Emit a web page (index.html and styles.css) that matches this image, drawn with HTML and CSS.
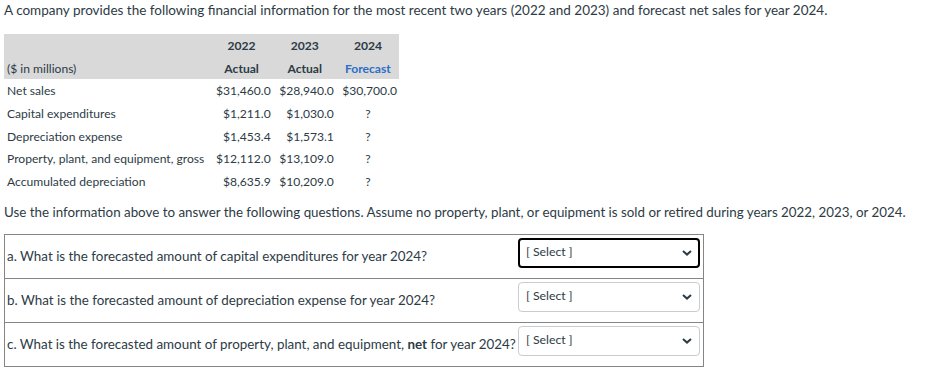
FILE: index.html
```html
<!DOCTYPE html>
<html lang="en">
<head>
    <meta charset="UTF-8">
    <title>Forecasting PP&amp;E</title>
    <link rel="stylesheet" href="styles.css">
</head>
<body>
    <p class="intro">A company provides the following financial information for the most recent two years (2022 and 2023) and forecast net sales for year 2024.</p>

    <table class="fin-table">
        <colgroup>
            <col class="col-label">
            <col class="col-num">
            <col class="col-num">
            <col class="col-num">
        </colgroup>
        <thead>
            <tr>
                <th></th>
                <th class="center">2022</th>
                <th class="center">2023</th>
                <th class="center">2024</th>
            </tr>
            <tr>
                <th class="label">($ in millions)</th>
                <th class="center">Actual</th>
                <th class="center">Actual</th>
                <th class="center forecast">Forecast</th>
            </tr>
        </thead>
        <tbody>
            <tr>
                <td>Net sales</td>
                <td class="num">$31,460.0</td>
                <td class="num">$28,940.0</td>
                <td class="num">$30,700.0</td>
            </tr>
            <tr>
                <td>Capital expenditures</td>
                <td class="num">$1,211.0</td>
                <td class="num">$1,030.0</td>
                <td class="unknown">?</td>
            </tr>
            <tr>
                <td>Depreciation expense</td>
                <td class="num">$1,453.4</td>
                <td class="num">$1,573.1</td>
                <td class="unknown">?</td>
            </tr>
            <tr>
                <td>Property, plant, and equipment, gross</td>
                <td class="num">$12,112.0</td>
                <td class="num">$13,109.0</td>
                <td class="unknown">?</td>
            </tr>
            <tr>
                <td>Accumulated depreciation</td>
                <td class="num">$8,635.9</td>
                <td class="num">$10,209.0</td>
                <td class="unknown">?</td>
            </tr>
        </tbody>
    </table>

    <p class="instructions">Use the information above to answer the following questions. Assume no property, plant, or equipment is sold or retired during years 2022, 2023, or 2024.</p>

    <table class="questions">
        <tr>
            <td class="q-text">a. What is the forecasted amount of capital expenditures for year 2024?</td>
            <td class="q-answer">
                <div class="select focused"><span>[ Select ]</span>
                    <svg viewBox="0 0 10 6" width="10" height="6"><path d="M1 1l4 3.6L9 1" fill="none" stroke="currentColor" stroke-width="2"/></svg>
                </div>
            </td>
        </tr>
        <tr>
            <td class="q-text">b. What is the forecasted amount of depreciation expense for year 2024?</td>
            <td class="q-answer">
                <div class="select"><span>[ Select ]</span>
                    <svg viewBox="0 0 10 6" width="10" height="6"><path d="M1 1l4 3.6L9 1" fill="none" stroke="currentColor" stroke-width="2"/></svg>
                </div>
            </td>
        </tr>
        <tr>
            <td class="q-text">c. What is the forecasted amount of property, plant, and equipment, <strong>net</strong> for year 2024?</td>
            <td class="q-answer">
                <div class="select"><span>[ Select ]</span>
                    <svg viewBox="0 0 10 6" width="10" height="6"><path d="M1 1l4 3.6L9 1" fill="none" stroke="currentColor" stroke-width="2"/></svg>
                </div>
            </td>
        </tr>
    </table>
</body>
</html>
```

FILE: styles.css
```css
body {
    margin: 0;
    padding: 1px 4px;
    font-family: Lato, "Open Sans", sans-serif;
    font-size: 13.5px;
    color: #2d3b45;
    background: #fff;
}
p {
    margin: 0;
    white-space: nowrap;
}
.intro {
    line-height: 18px;
}
.fin-table {
    margin-top: 15px;
    border-collapse: collapse;
    width: 395px;
    font-size: 12.1px;
}
.col-label {
    width: 205px;
}
.col-num {
    width: 63px;
}
.fin-table th,
.fin-table td {
    height: 22.7px;
    padding: 0 2px 0 3px;
    white-space: nowrap;
}
.fin-table thead tr {
    background-color: #d9d9d9;
}
.fin-table th {
    font-weight: bold;
}
.fin-table th.label {
    font-weight: normal;
    text-align: left;
}
.center {
    text-align: center;
}
.forecast {
    color: #2b6fc6;
}
.num {
    text-align: right;
}
.unknown {
    text-align: center;
}
.instructions {
    margin-top: 10px;
    line-height: 18px;
    font-size: 13.35px;
}
.questions {
    margin-top: 13px;
    width: 700px;
    border-collapse: collapse;
    border: 1px solid #858585;
    font-size: 13.4px;
}
.questions td {
    border-top: 1px solid #858585;
    border-bottom: 1px solid #858585;
    padding: 0;
}
.q-text {
    width: 510px;
    padding-left: 2px !important;
    vertical-align: middle;
    white-space: nowrap;
}
.q-answer {
    vertical-align: top;
    padding: 3px 3px 10px 1px !important;
}
.select {
    height: 30px;
    box-sizing: border-box;
    border: 1px solid #c7cdd1;
    border-radius: 4px;
    display: flex;
    align-items: center;
    justify-content: space-between;
    padding: 0 7px 0 7px;
    font-size: 12.3px;
    color: #2d3b45;
}
.select span {
    margin-top: -3px;
}
.select.focused {
    border: 2px solid #000;
    padding: 0 6px 0 6px;
}
```
